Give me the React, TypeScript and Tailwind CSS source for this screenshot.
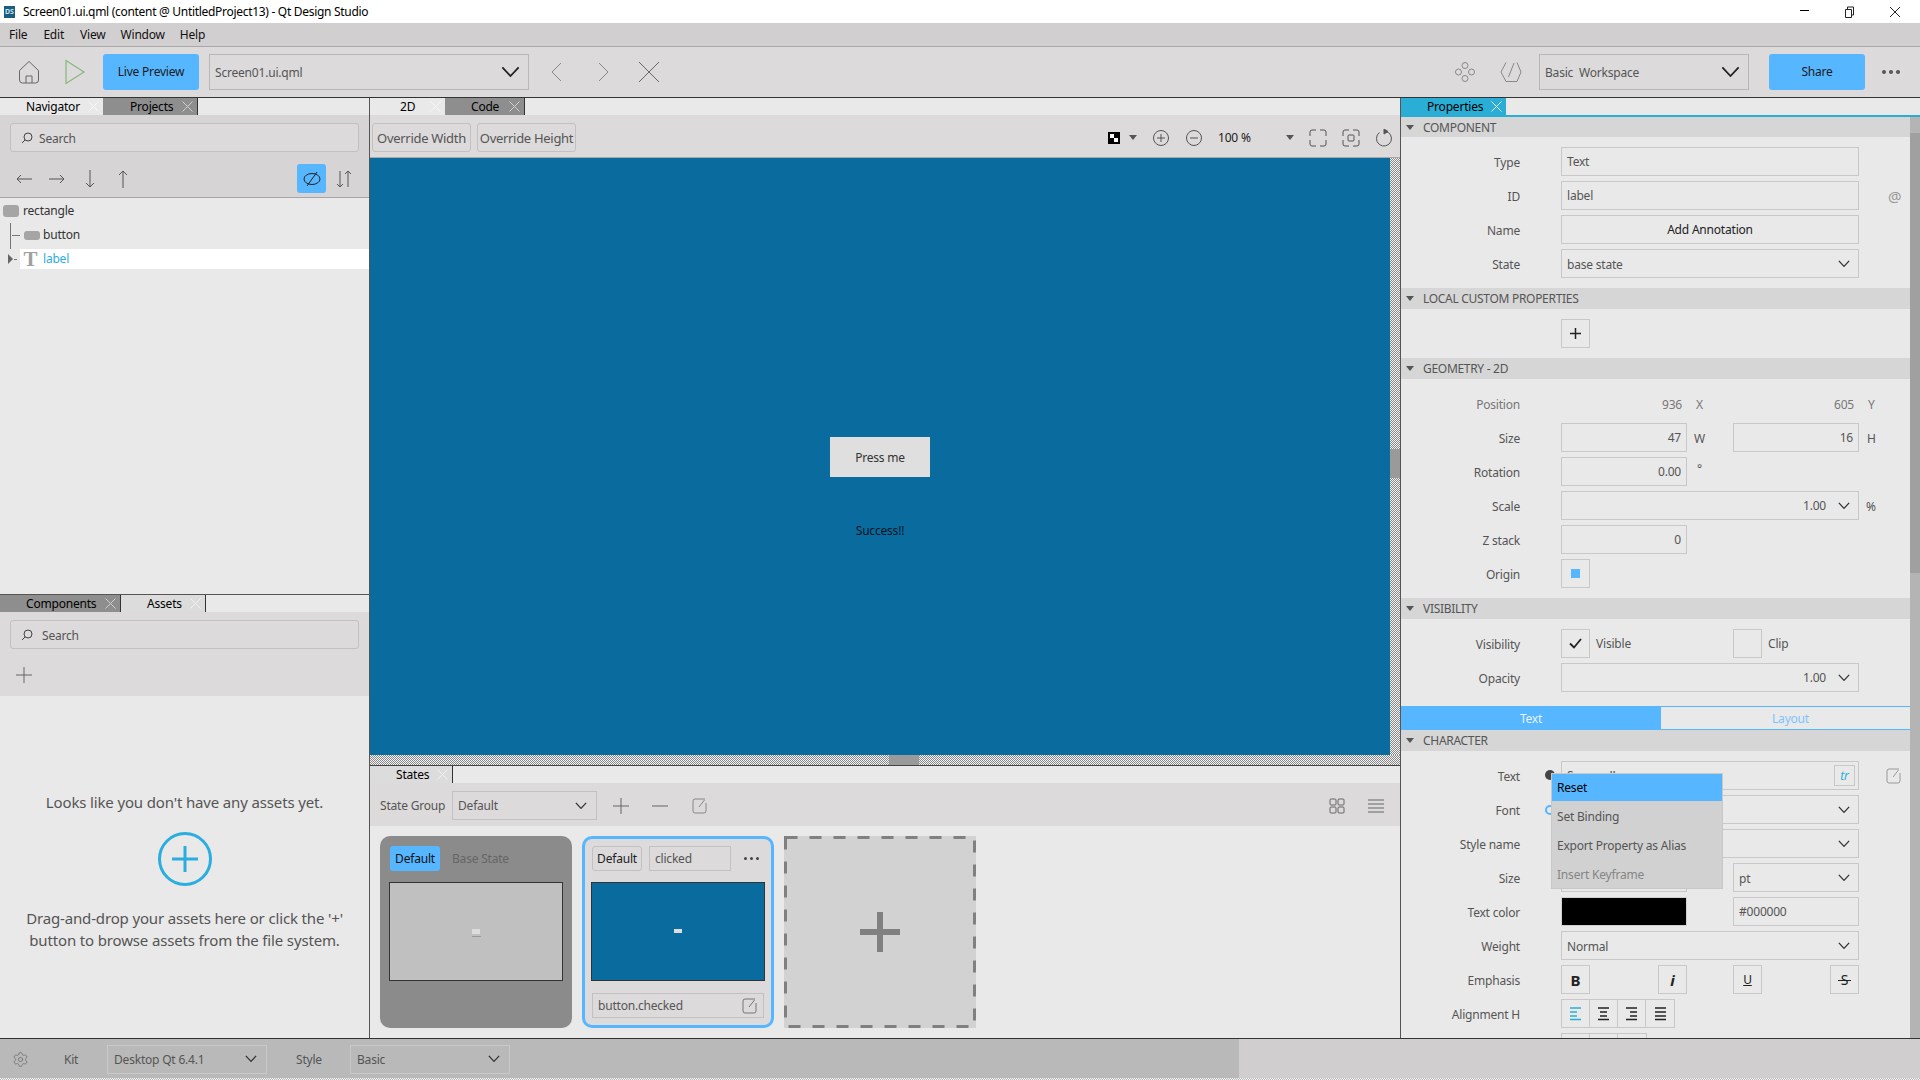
import React from 'react';
import { Settings } from 'lucide-react';

const Svg: React.FC<{ size?: number; stroke?: string; sw?: number; className?: string; children: React.ReactNode }> = ({ size = 24, stroke = '#555', sw = 1, className, children }) => (
  <svg width={size} height={size} viewBox={`0 0 ${size} ${size}`} fill="none" stroke={stroke} strokeWidth={sw} className={`shrink-0 ${className ?? ''}`}>
    {children}
  </svg>
);

const Chevron: React.FC<{ w?: number; sw?: number; stroke?: string }> = ({ w = 14, sw = 1.5, stroke = '#333' }) => (
  <svg width={w} height={w * 0.6} viewBox="0 0 14 8.4" fill="none" stroke={stroke} strokeWidth={sw * (14 / w)} className="shrink-0">
    <path d="M1 1l6 6.4L13 1" />
  </svg>
);

const Tri: React.FC = () => <div className="w-0 h-0 border-x-[4px] border-x-transparent border-t-[5px] border-t-[#555] shrink-0" />;

const EditIcon: React.FC<{ stroke?: string }> = ({ stroke = '#777' }) => (
  <Svg size={16} stroke={stroke}>
    <path d="M14 5v8a2 2 0 0 1-2 2H3a2 2 0 0 1-2-2V3a2 2 0 0 1 2-2h10" />
    <path d="M12.5 2L7 9" />
  </Svg>
);

const Search: React.FC<{ ml: string }> = ({ ml }) => (
  <div className="h-[29px] mx-[10px] rounded-[3px] border border-[#c2c0c1] bg-[#dcdadb] flex items-center text-[#555]">
    <svg width="14" height="14" viewBox="0 0 14 14" fill="none" stroke="#444" className="ml-[9px]">
      <circle cx="8" cy="6" r="4" />
      <path d="M5 9l-3 3" />
    </svg>
    <span className={`pt-[2px] ${ml}`}>Search</span>
  </div>
);

const Tab: React.FC<{ label: string; w: string; bg: string; textMl: string; xColor: string; dividerDark?: boolean }> = ({ label, w, bg, textMl, xColor, dividerDark }) => (
  <div className={`h-[17px] flex items-center text-black ${w} ${bg} ${dividerDark ? 'border-r border-[#333]' : ''}`}>
    <span className={textMl}>{label}</span>
    <svg width="11" height="11" viewBox="0 0 11 11" stroke={xColor} className="ml-auto mr-[4px]">
      <path d="M0.5 0.5l10 10M10.5 0.5l-10 10" />
    </svg>
  </div>
);

const Section: React.FC<{ title: string; first?: boolean }> = ({ title, first }) => (
  <div className={`${first ? 'h-[20px]' : 'h-[21px]'} bg-[#d6d6d6] flex items-center text-[#555]`}>
    <div className="ml-[5px] mr-[9px]"><Tri /></div>
    <span className="pt-[1px] tracking-[-0.3px]">{title}</span>
  </div>
);

const Label: React.FC<{ text: string; dim?: boolean }> = ({ text, dim }) => (
  <div className={`w-[119px] mr-[41px] pt-[2px] text-right shrink-0 ${dim ? 'text-[#777]' : 'text-[#555]'}`}>{text}</div>
);

const Row: React.FC<{ label: string; dim?: boolean; children?: React.ReactNode }> = ({ label, dim, children }) => (
  <div className="flex items-center h-[29px] mb-[5px]">
    <Label text={label} dim={dim} />
    {children}
  </div>
);

const Field: React.FC<{ w?: string; right?: boolean; center?: boolean; text?: string; chevron?: boolean; dark?: boolean; children?: React.ReactNode }> = ({ w = 'w-[298px]', right, center, text, chevron, dark, children }) => (
  <div className={`h-[29px] border border-[#c8c8c8] flex items-center shrink-0 ${w} ${dark ? 'text-[#222]' : 'text-[#555]'} ${right ? 'justify-end pr-[5px]' : center ? 'justify-center' : 'pl-[5px]'}`}>
    {!chevron && text && <span className="pt-[1px]">{text}</span>}
    {chevron && !right && <span className="flex-1 pt-[2px]">{text}</span>}
    {chevron && right && <span className="mr-[12px] pt-[1px]">{text}</span>}
    {chevron && <span className={right ? 'mr-[3px]' : 'mr-[8px]'}><Chevron w={12} sw={1.3} /></span>}
    {children}
  </div>
);

const Square: React.FC<{ children?: React.ReactNode; className?: string }> = ({ children, className }) => (
  <div className={`w-[29px] h-[29px] border border-[#c8c8c8] flex items-center justify-center shrink-0 ${className ?? ''}`}>{children}</div>
);

const AlignIcon: React.FC<{ kind: 'l' | 'c' | 'r' | 'j'; color: string }> = ({ kind, color }) => {
  const lines: Record<string, string> = {
    l: 'M0 1h11M0 5h7M0 9h7M0 12.5h11',
    c: 'M0 1h11M2 5h7M2 9h7M0 12.5h11',
    r: 'M0 1h11M4 5h7M4 9h7M0 12.5h11',
    j: 'M0 1h11M0 5h11M0 9h11M0 12.5h11',
  };
  return (
    <svg width="11" height="14" viewBox="0 0 11 14" stroke={color} strokeWidth="1.6" fill="none">
      <path d={lines[kind]} />
    </svg>
  );
};

export default function App() {
  return (
    <div className="w-[1920px] h-[1080px] flex flex-col overflow-hidden bg-[#e9e9e9] text-[12px] leading-[16px] font-['Noto_Sans','Open_Sans',sans-serif] tracking-[-0.2px]">
      {/* Title bar */}
      <div className="h-[23px] bg-white flex items-center shrink-0">
        <div className="ml-[4px] w-[11px] h-[12px] bg-[#1c5c7c] text-[#bfe6f5] text-[7px] leading-[12px] font-bold text-center tracking-normal">DS</div>
        <span className="ml-[8px] text-black tracking-[-0.3px]">Screen01.ui.qml (content @ UntitledProject13) - Qt Design Studio</span>
        <div className="flex-1" />
        <div className="w-[9px] h-px bg-black mr-[34px] mb-[2px]" />
        <svg width="12" height="12" viewBox="0 0 12 12" fill="none" stroke="#222" className="mr-[34px]">
          <path d="M2.5 3.5h6v8h-6zM4.5 3.5V1h6v8H8.5" />
        </svg>
        <svg width="12" height="12" viewBox="0 0 12 12" stroke="#222" className="mr-[19px]">
          <path d="M1 1l10 10M11 1L1 11" />
        </svg>
      </div>

      {/* Menu */}
      <div className="h-[24px] bg-[#d1cfd0] border-b border-[#a9a9a9] flex items-center shrink-0 text-[#111]">
        <span className="ml-[9px]">File</span>
        <span className="ml-[16px]">Edit</span>
        <span className="ml-[16px]">View</span>
        <span className="ml-[15px]">Window</span>
        <span className="ml-[15px]">Help</span>
      </div>

      {/* Main toolbar */}
      <div className="h-[51px] bg-[#dcdadb] border-b border-[#333] flex items-center shrink-0">
        <svg width="22" height="24" viewBox="0 0 22 24" fill="none" stroke="#666" className="ml-[18px]">
          <path d="M1.5 10.5L11 1.5l9.5 9V20a3 3 0 0 1-3 3h-13a3 3 0 0 1-3-3z" />
          <path d="M8 23v-7h6v7" />
        </svg>
        <svg width="22" height="26" viewBox="0 0 22 26" fill="none" stroke="#85b87a" strokeWidth="1.2" className="ml-[24px]">
          <path d="M2 1.5L20 13 2 24.5z" />
        </svg>
        <div className="ml-[17px] w-[96px] h-[36px] rounded-[3px] bg-[#56b6ff] flex items-center justify-center text-[#1a1a1a]">Live Preview</div>
        <div className="ml-[10px] w-[320px] h-[36px] border border-[#b9b7b8] flex items-center pl-[5px] text-[#555]">
          <span className="flex-1 pt-[1px]">Screen01.ui.qml</span>
          <span className="mr-[8px]"><Chevron w={19} sw={1.8} stroke="#222" /></span>
        </div>
        <Svg className="ml-[16px]" stroke="#888"><path d="M16 3L7 12l9 9" /></Svg>
        <Svg className="ml-[22px]" stroke="#888"><path d="M8 3l9 9-9 9" /></Svg>
        <Svg className="ml-[22px]" stroke="#666"><path d="M2 2l20 20M22 2L2 22" /></Svg>
        <div className="flex-1" />
        <Svg stroke="#888">
          <circle cx="12" cy="5.5" r="3" />
          <circle cx="5.5" cy="12" r="3" />
          <circle cx="18.5" cy="12" r="3" />
          <circle cx="12" cy="18.5" r="3" />
        </Svg>
        <Svg className="ml-[22px]" stroke="#888">
          <path d="M7 2.5L2 12l5 9.5h11l4-9.5-4-9.5" />
          <path d="M15 3L9.5 17" />
        </Svg>
        <div className="ml-[16px] w-[210px] h-[36px] border border-[#b9b7b8] flex items-center pl-[5px] text-[#555]">
          <span className="flex-1 pt-[1px]">Basic &nbsp;Workspace</span>
          <span className="mr-[8px]"><Chevron w={19} sw={1.8} stroke="#222" /></span>
        </div>
        <div className="ml-[20px] w-[96px] h-[36px] rounded-[3px] bg-[#56b6ff] flex items-center justify-center text-[#1a1a1a]">Share</div>
        <div className="ml-[16px] mr-[19px] w-[20px] flex justify-between px-[1px]">
          <span className="w-[4px] h-[4px] rounded-full bg-[#555]" />
          <span className="w-[4px] h-[4px] rounded-full bg-[#555]" />
          <span className="w-[4px] h-[4px] rounded-full bg-[#555]" />
        </div>
      </div>

      {/* Docks */}
      <div className="h-[941px] flex border-b border-[#333] shrink-0">
        {/* Left column */}
        <div className="w-[370px] shrink-0 border-r border-[#555] flex flex-col">
          <div className="h-[17px] flex">
            <Tab label="Navigator" w="w-[103px]" bg="bg-[#e9e9e9]" xColor="#f6f6f6" textMl="ml-[26px]" />
            <Tab label="Projects" w="w-[95px]" bg="bg-[#8e8e8e]" xColor="#cfcfcf" textMl="ml-[27px]" dividerDark />
          </div>
          <div className="h-[83px] bg-[#d6d4d5] border-b border-[#a5a5a5] pt-[8px]">
            <Search ml="ml-[5px]" />
            <div className="flex items-center h-[29px] mt-[12px]">
              <svg width="16" height="10" viewBox="0 0 16 10" fill="none" stroke="#555" className="ml-[16px]"><path d="M16 5H1M5 1L1 5l4 4" /></svg>
              <svg width="16" height="10" viewBox="0 0 16 10" fill="none" stroke="#555" className="ml-[17px]"><path d="M0 5h15M11 1l4 4-4 4" /></svg>
              <svg width="10" height="18" viewBox="0 0 10 18" fill="none" stroke="#555" className="ml-[20px]"><path d="M5 0v17M1 13l4 4 4-4" /></svg>
              <svg width="10" height="18" viewBox="0 0 10 18" fill="none" stroke="#555" className="ml-[23px]"><path d="M5 18V1M1 5l4-4 4 4" /></svg>
              <div className="ml-[169px] w-[29px] h-[29px] rounded-[3px] bg-[#56b6ff] flex items-center justify-center">
                <svg width="18" height="16" viewBox="0 0 18 16" fill="none" stroke="#222"><ellipse cx="9" cy="8" rx="8" ry="5.5" /><path d="M14 1L4 15" /></svg>
              </div>
              <svg width="16" height="18" viewBox="0 0 16 18" fill="none" stroke="#555" className="ml-[10px]"><path d="M4 1v16M1 14l3 3 3-3M12 17V1M9 4l3-3 3 3" /></svg>
            </div>
          </div>
          <div className="h-[396px] pt-[3px] text-[#333]">
            <div className="h-[20px] flex items-center">
              <div className="ml-[3px] w-[16px] h-[12px] rounded-[3px] bg-[#a5a5a5]" />
              <span className="ml-[4px]">rectangle</span>
            </div>
            <div className="h-[4px]" />
            <div className="h-[20px] flex items-center">
              <div className="ml-[10px] w-px h-[24px] bg-[#777]" />
              <div className="ml-[1px] w-[8px] h-px bg-[#777]" />
              <div className="ml-[4px] w-[16px] h-[9px] rounded-[3px] bg-[#a5a5a5]" />
              <span className="ml-[3px]">button</span>
            </div>
            <div className="h-[4px] ml-[10px] w-px bg-[#777]" />
            <div className="h-[20px] flex items-center">
              <div className="ml-[8px] w-0 h-0 border-y-[5px] border-y-transparent border-l-[5px] border-l-[#666]" />
              <div className="w-[3px] h-px bg-[#777] ml-[1px]" />
              <div className="ml-[3px] flex-1 h-[20px] bg-white flex items-center">
                <span className="ml-[3px] w-[15px] text-[#a0a0a0] text-[21px] leading-[20px] font-bold font-['Liberation_Serif',serif] text-center">T</span>
                <span className="ml-[5px] text-[#2aaee0]">label</span>
              </div>
            </div>
          </div>
          <div className="border-t border-[#555] h-[18px] flex bg-[#e9e9e9]">
            <Tab label="Components" w="w-[121px]" bg="bg-[#8e8e8e]" xColor="#cfcfcf" textMl="ml-[26px]" dividerDark />
            <Tab label="Assets" w="w-[85px]" bg="bg-[#dcdcdc]" xColor="#f0f0f0" textMl="ml-[26px]" dividerDark />
          </div>
          <div className="h-[84px] bg-[#dcdadb] pt-[8px]">
            <Search ml="ml-[8px]" />
            <svg width="16" height="16" viewBox="0 0 16 16" stroke="#666" className="ml-[16px] mt-[18px]"><path d="M8 0v16M0 8h16" /></svg>
          </div>
          <div className="flex-1 pt-[95px] flex flex-col items-center text-[15px] leading-[22px] text-[#555] tracking-[-0.15px]">
            <span>Looks like you don't have any assets yet.</span>
            <svg width="54" height="54" viewBox="0 0 54 54" fill="none" stroke="#2aaee0" strokeWidth="3" className="mt-[19px]">
              <circle cx="27" cy="27" r="25.5" />
              <path d="M14 27h26M27 14v26" />
            </svg>
            <span className="mt-[21px] text-center">Drag-and-drop your assets here or click the '+'<br />button to browse assets from the file system.</span>
          </div>
        </div>

        {/* Centre column */}
        <div className="w-[1031px] shrink-0 border-r border-[#555] flex flex-col">
          <div className="h-[17px] flex">
            <Tab label="2D" w="w-[75px]" bg="bg-[#e9e9e9]" xColor="#f6f6f6" textMl="ml-[30px]" />
            <Tab label="Code" w="w-[80px]" bg="bg-[#8e8e8e]" xColor="#cfcfcf" textMl="ml-[26px]" dividerDark />
          </div>
          <div className="h-[43px] bg-[#dcdadb] border-b border-[#a9a9a9] flex items-center text-[#555] pt-[3px]">
            <div className="ml-[2px] w-[99px] h-[29px] border border-[#c2c0c1] rounded-[3px] flex items-center justify-center text-[13px] tracking-[-0.3px]">Override Width</div>
            <div className="ml-[6px] w-[99px] h-[29px] border border-[#c2c0c1] rounded-[3px] flex items-center justify-center text-[13px] tracking-[-0.3px]">Override Height</div>
            <div className="flex-1" />
            <div className="w-[12px] h-[12px] bg-black grid grid-cols-2 p-[2px]">
              <span className="bg-white" /><span /><span /><span className="bg-white" />
            </div>
            <div className="ml-[9px]"><Tri /></div>
            <Svg size={18} className="ml-[15px]"><circle cx="9" cy="9" r="7.5" /><path d="M5 9h8M9 5v8" /></Svg>
            <Svg size={18} className="ml-[15px]"><circle cx="9" cy="9" r="7.5" /><path d="M5 9h8" /></Svg>
            <span className="ml-[15px] w-[30px] text-[#222] whitespace-nowrap">100 %</span>
            <div className="ml-[38px]"><Tri /></div>
            <Svg size={18} className="ml-[15px]"><path d="M1 7V3a2 2 0 0 1 2-2h4M11 1h4a2 2 0 0 1 2 2v4M17 11v4a2 2 0 0 1-2 2h-4M7 17H3a2 2 0 0 1-2-2v-4" /></Svg>
            <Svg size={18} className="ml-[15px]"><path d="M1 7V3a2 2 0 0 1 2-2h4M11 1h4a2 2 0 0 1 2 2v4M17 11v4a2 2 0 0 1-2 2h-4M7 17H3a2 2 0 0 1-2-2v-4" /><rect x="6" y="6" width="6" height="6" rx="1" /></Svg>
            <Svg size={18} className="ml-[15px] mr-[7px]"><path d="M10 2.1A7.5 7.5 0 1 1 4.5 3.5" /><path d="M9 0l4 2.5L9 5z" fill="#555" /></Svg>
          </div>
          <div className="h-[597px] flex">
            <div className="flex-1 bg-[#0a6b9e] flex flex-col items-center pt-[279px]">
              <div className="w-[100px] h-[40px] bg-[#dfdfdf] flex items-center justify-center text-[#333] pt-[2px]">Press me</div>
              <span className="mt-[46px] text-[#04141f]">Success!!</span>
            </div>
            <div className="w-[10px] bg-[repeating-conic-gradient(#8a8a8a_0_25%,#f2f2f2_0_50%)] bg-[length:2px_2px] pt-[291px]">
              <div className="h-[29px] bg-[#9a9a9a]" />
            </div>
          </div>
          <div className="h-[10px] bg-[repeating-conic-gradient(#8a8a8a_0_25%,#f2f2f2_0_50%)] bg-[length:2px_2px] pl-[519px]">
            <div className="w-[30px] h-[10px] bg-[#9a9a9a]" />
          </div>
          <div className="border-t border-[#444] h-[18px] flex">
            <Tab label="States" w="w-[83px]" bg="bg-[#dcdcdc]" xColor="#f0f0f0" textMl="ml-[26px]" dividerDark />
          </div>
          <div className="h-[43px] bg-[#dcdadb] flex items-center text-[#555] pt-[2px]">
            <span className="ml-[10px] w-[72px] pt-[1px]">State Group</span>
            <div className="w-[145px] h-[29px] border border-[#c2c0c1] flex items-center pl-[5px]">
              <span className="flex-1 pt-[1px]">Default</span>
              <span className="mr-[9px]"><Chevron w={12} sw={1.3} /></span>
            </div>
            <svg width="16" height="16" viewBox="0 0 16 16" stroke="#666" className="ml-[16px]"><path d="M8 0v16M0 8h16" /></svg>
            <svg width="16" height="16" viewBox="0 0 16 16" stroke="#666" className="ml-[23px]"><path d="M0 8h16" /></svg>
            <span className="ml-[24px]"><EditIcon stroke="#888" /></span>
            <div className="flex-1" />
            <svg width="16" height="16" viewBox="0 0 16 16" fill="none" stroke="#666" className="mr-[23px]">
              <rect x="1" y="1" width="6" height="6" rx="1" /><rect x="9" y="1" width="6" height="6" rx="1" /><rect x="1" y="9" width="6" height="6" rx="1" /><rect x="9" y="9" width="6" height="6" rx="1" />
            </svg>
            <svg width="16" height="14" viewBox="0 0 16 14" stroke="#666" className="mr-[16px]"><path d="M0 1h16M0 5h16M0 9h16M0 13h16" /></svg>
          </div>
          <div className="flex-1 flex gap-[10px] pl-[10px] pt-[10px]">
            <div className="w-[192px] h-[192px] rounded-[10px] bg-[#8b8b8b] pt-[10px] pl-[9px]">
              <div className="flex items-center h-[25px]">
                <div className="ml-[1px] w-[50px] h-[25px] rounded-[3px] bg-[#56b6ff] flex items-center justify-center text-[#111]">Default</div>
                <span className="ml-[12px] text-[#666]">Base State</span>
              </div>
              <div className="mt-[11px] w-[174px] h-[99px] border border-[#333] bg-[#c0c0c0] flex flex-col items-center pt-[46px]">
                <div className="w-[8px] h-[5px] bg-[#dddddd]" />
                <div className="mt-[2px] w-[9px] h-px bg-[#9a9a9a]" />
              </div>
            </div>
            <div className="w-[192px] h-[192px] rounded-[10px] border-[3px] border-[#56b6ff] bg-[#dcdadb] pt-[7px] pl-[7px]">
              <div className="flex items-center h-[25px]">
                <div className="w-[50px] h-[25px] rounded-[3px] border border-[#c2c0c1] flex items-center justify-center text-[#222]">Default</div>
                <div className="ml-[7px] w-[82px] h-[25px] border border-[#c2c0c1] flex items-center pl-[5px] text-[#555]">clicked</div>
                <div className="ml-[13px] flex gap-[3px]">
                  <span className="w-[3px] h-[3px] rounded-full bg-[#444]" />
                  <span className="w-[3px] h-[3px] rounded-full bg-[#444]" />
                  <span className="w-[3px] h-[3px] rounded-full bg-[#444]" />
                </div>
              </div>
              <div className="-ml-[1px] mt-[11px] w-[174px] h-[99px] border border-[#333] bg-[#0a6b9e] flex flex-col items-center pt-[46px]">
                <div className="w-[8px] h-[4px] bg-[#dddddd]" />
              </div>
              <div className="mt-[12px] w-[172px] h-[25px] border border-[#c2c0c1] flex items-center pl-[5px] pr-[5px] text-[#555]">
                <span className="flex-1 pt-[1px]">button.checked</span>
                <EditIcon />
              </div>
            </div>
            <div className="w-[192px] h-[192px] bg-[#d2d2d2] relative flex items-center justify-center">
              <svg width="192" height="192" viewBox="0 0 192 192" fill="none" stroke="#808080" strokeWidth="3" strokeDasharray="12 12" className="absolute inset-0">
                <rect x="1.5" y="1.5" width="189" height="189" />
              </svg>
              <svg width="40" height="40" viewBox="0 0 40 40" stroke="#808080" strokeWidth="6"><path d="M20 0v40M0 20h40" /></svg>
            </div>
          </div>
        </div>

        {/* Properties column */}
        <div className="flex-1 flex flex-col overflow-hidden">
          <div className="h-[19px] border-b-2 border-[#2aaed6] flex shrink-0">
            <div className="w-[105px] h-[17px] bg-[#2aaed6] flex items-center text-black">
              <span className="ml-[26px]">Properties</span>
              <svg width="11" height="11" viewBox="0 0 11 11" stroke="#e8e8e8" className="ml-auto mr-[4px]"><path d="M0.5 0.5l10 10M10.5 0.5l-10 10" /></svg>
            </div>
          </div>
          <div className="flex-1 flex overflow-hidden">
            <div className="w-[509px] shrink-0 relative">
              <Section title="COMPONENT" first />
              <div className="pt-[10px] pb-[5px]">
                <Row label="Type"><Field text="Text" /></Row>
                <Row label="ID">
                  <Field text="label" />
                  <span className="ml-[29px] text-[#999] text-[15px]">@</span>
                </Row>
                <Row label="Name"><Field text="Add Annotation" center dark /></Row>
                <Row label="State"><Field text="base state" chevron /></Row>
              </div>
              <Section title="LOCAL CUSTOM PROPERTIES" />
              <div className="pt-[10px] pb-[5px]">
                <Row label=""><Square><svg width="11" height="11" viewBox="0 0 11 11" stroke="#222" strokeWidth="1.5"><path d="M5.5 0v11M0 5.5h11" /></svg></Square></Row>
              </div>
              <Section title="GEOMETRY - 2D" />
              <div className="pt-[10px] pb-[5px]">
                <Row label="Position" dim>
                  <div className="w-[126px] text-right pr-[5px] pt-[2px] text-[#777]">936</div>
                  <span className="ml-[9px] w-[37px] pt-[2px] text-[#777]">X</span>
                  <div className="w-[126px] text-right pr-[5px] pt-[2px] text-[#777]">605</div>
                  <span className="ml-[9px] pt-[2px] text-[#777]">Y</span>
                </Row>
                <Row label="Size">
                  <Field w="w-[126px]" right text="47" />
                  <span className="ml-[7px] w-[39px] pt-[2px] text-[#555]">W</span>
                  <Field w="w-[126px]" right text="16" />
                  <span className="ml-[8px] pt-[2px] text-[#555]">H</span>
                </Row>
                <Row label="Rotation">
                  <Field w="w-[126px]" right text="0.00" />
                  <span className="ml-[10px] mb-[6px] text-[#555]">°</span>
                </Row>
                <Row label="Scale">
                  <Field right chevron text="1.00" />
                  <span className="ml-[7px] pt-[2px] text-[#555]">%</span>
                </Row>
                <Row label="Z stack"><Field w="w-[126px]" right text="0" /></Row>
                <Row label="Origin"><Square><div className="w-[9px] h-[9px] bg-[#56b6ff]" /></Square></Row>
              </div>
              <Section title="VISIBILITY" />
              <div className="pt-[10px] pb-[9px]">
                <Row label="Visibility">
                  <Square>
                    <svg width="13" height="11" viewBox="0 0 13 11" fill="none" stroke="#222" strokeWidth="1.8"><path d="M1 5.5l4 4L12 1" /></svg>
                  </Square>
                  <span className="ml-[6px] w-[137px] pt-[1px] text-[#555]">Visible</span>
                  <Square />
                  <span className="ml-[6px] pt-[1px] text-[#555]">Clip</span>
                </Row>
                <Row label="Opacity"><Field right chevron text="1.00" /></Row>
              </div>
              <div className="h-[24px] flex border-y border-[#56b6ff]">
                <div className="w-[260px] bg-[#56b6ff] flex items-center justify-center text-[#e6f3ff] pt-[1px]">Text</div>
                <div className="flex-1 flex items-center justify-center text-[#7cc4ff] pl-[10px] pt-[1px]">Layout</div>
              </div>
              <Section title="CHARACTER" />
              <div className="pt-[10px]">
                <Row label="Text">
                  <Field>
                    <span className="flex-1">Success!!</span>
                    <div className="w-[21px] h-[21px] mr-[3px] border border-[#c8c8c8] flex items-center justify-center text-[#2aaed6] italic">tr</div>
                  </Field>
                  <span className="ml-[27px]"><EditIcon stroke="#999" /></span>
                </Row>
                <Row label="Font"><Field chevron /></Row>
                <Row label="Style name"><Field chevron /></Row>
                <Row label="Size">
                  <Field w="w-[126px]" />
                  <div className="w-[46px]" />
                  <Field w="w-[126px]" text="pt" chevron />
                </Row>
                <Row label="Text color">
                  <div className="w-[126px] h-[29px] border border-[#d0d0d0] bg-black" />
                  <div className="w-[46px]" />
                  <Field w="w-[126px]" text="#000000" />
                </Row>
                <Row label="Weight"><Field text="Normal" chevron /></Row>
                <Row label="Emphasis">
                  <Square><span className="text-[15px] font-bold text-[#222]">B</span></Square>
                  <div className="w-[68px]" />
                  <Square><span className="text-[15px] font-bold italic text-[#222]">i</span></Square>
                  <div className="w-[46px]" />
                  <Square><span className="text-[#222] underline">U</span></Square>
                  <div className="w-[68px]" />
                  <Square>
                    <span className="relative text-[14px] text-[#222] px-[1px]">
                      S
                      <span className="absolute left-[-2px] right-[-2px] top-[8px] h-px bg-[#222]" />
                    </span>
                  </Square>
                </Row>
                <Row label="Alignment H">
                  <div className="flex border border-[#c8c8c8] h-[29px]">
                    <div className="w-[28px] flex items-center justify-center border-r border-[#c8c8c8]"><AlignIcon kind="l" color="#2aaed6" /></div>
                    <div className="w-[28px] flex items-center justify-center border-r border-[#c8c8c8]"><AlignIcon kind="c" color="#222" /></div>
                    <div className="w-[28px] flex items-center justify-center border-r border-[#c8c8c8]"><AlignIcon kind="r" color="#222" /></div>
                    <div className="w-[28px] flex items-center justify-center"><AlignIcon kind="j" color="#222" /></div>
                  </div>
                </Row>
                <Row label="">
                  <div className="flex border border-[#c8c8c8] h-[29px]">
                    <div className="w-[28px] border-r border-[#c8c8c8]" />
                    <div className="w-[28px] border-r border-[#c8c8c8]" />
                    <div className="w-[28px]" />
                  </div>
                </Row>
              </div>

              {/* Reset indicators peeking out beside the menu */}
              <div className="absolute left-[144px] top-[653px] w-[10px] h-[10px] rounded-full bg-[#444]" />
              <div className="absolute left-[144px] top-[688px] w-[10px] h-[10px] rounded-full border-2 border-[#56b6ff]" />

              {/* Context menu */}
              <div className="absolute left-[150px] top-[656px] w-[172px] h-[116px] bg-[#d1d1d1] border border-[#c8c8c8]">
                <div className="h-[27px] bg-[#56b6ff] flex items-center pl-[5px] text-black">Reset</div>
                <div className="h-[29px] flex items-center pl-[5px] pt-[2px] text-[#555]">Set Binding</div>
                <div className="h-[29px] flex items-center pl-[5px] pt-[2px] text-[#555]">Export Property as Alias</div>
                <div className="h-[29px] flex items-center pl-[5px] pt-[2px] text-[#858585]">Insert Keyframe</div>
              </div>
            </div>
            <div className="flex-1 bg-[#b4b4b4] pt-[16px]">
              <div className="h-[440px] bg-[#a0a0a0]" />
            </div>
          </div>
        </div>
      </div>

      {/* Status bar */}
      <div className="h-[39px] flex shrink-0 bg-[#d0cecf]">
        <div className="w-[1239px] bg-[#b9b9b9] flex items-center text-[#555] pt-[1px]">
          <Settings size={17} strokeWidth={1} color="#666" className="ml-[12px] shrink-0" />
          <span className="ml-[35px] w-[43px] pt-[1px]">Kit</span>
          <div className="w-[160px] h-[29px] border border-[#c9c9c9] flex items-center pl-[6px]">
            <span className="flex-1 pt-[1px]">Desktop Qt 6.4.1</span>
            <span className="mr-[9px]"><Chevron w={12} sw={1.3} /></span>
          </div>
          <span className="ml-[29px] w-[54px] pt-[1px]">Style</span>
          <div className="w-[160px] h-[29px] border border-[#c9c9c9] flex items-center pl-[6px]">
            <span className="flex-1 pt-[1px]">Basic</span>
            <span className="mr-[9px]"><Chevron w={12} sw={1.3} /></span>
          </div>
        </div>
      </div>
      <div className="flex-1 bg-[repeating-conic-gradient(#bbbbbb_0_25%,#f2f2f2_0_50%)] bg-[length:2px_2px]" />
    </div>
  );
}
